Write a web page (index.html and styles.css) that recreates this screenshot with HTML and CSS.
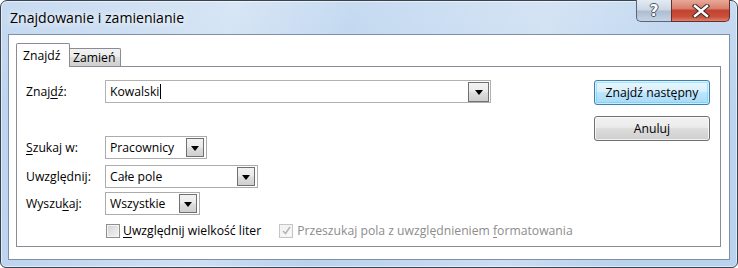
FILE: index.html
```html
<!DOCTYPE html>
<html lang="pl">
<head>
<meta charset="utf-8">
<title>Znajdowanie i zamienianie</title>
<link rel="stylesheet" href="styles.css">
</head>
<body>
<div class="window">
  <div class="titlebar">
    <div class="title">Znajdowanie i zamienianie</div>
    <div class="caption-buttons">
      <div class="cap help"><span class="qmark">?</span></div>
      <div class="cap close">
        <svg width="20" height="14" viewBox="0 0 20 14">
          <path d="M4 2 L16 12 M16 2 L4 12" stroke="#3a2a2a" stroke-width="4.4" stroke-linecap="square" fill="none"/>
          <path d="M4 2 L16 12 M16 2 L4 12" stroke="#ffffff" stroke-width="2.4" stroke-linecap="square" fill="none"/>
        </svg>
      </div>
    </div>
  </div>
  <div class="client">
    <div class="tabs">
      <div class="tab active">Znajdź</div>
      <div class="tab">Zamień</div>
    </div>
    <div class="panel">
      <div class="form">
        <div class="row r1">
          <div class="lbl">Znaj<u>d</u>ź:</div>
          <div class="textbox">Kowalski<span class="caret"></span><span class="ddbtn big"><i class="arrow"></i></span></div>
        </div>
        <div class="row r2">
          <div class="lbl"><u>S</u>zukaj w:</div>
          <div class="combo w-prac">Pracownicy<span class="ddbtn"><i class="arrow"></i></span></div>
        </div>
        <div class="row r3">
          <div class="lbl">Uwzględnij:</div>
          <div class="combo w-uwz">Całe pole<span class="ddbtn"><i class="arrow"></i></span></div>
        </div>
        <div class="row r4">
          <div class="lbl">Wyszu<u>k</u>aj:</div>
          <div class="combo w-wsz">Wszystkie<span class="ddbtn"><i class="arrow"></i></span></div>
        </div>
        <div class="row r5">
          <div class="lbl"></div>
          <div class="checks">
            <div class="check c1"><span class="box"></span><span class="ctext"><u>U</u>względnij wielkość liter</span></div>
            <div class="check c2 disabled"><span class="box checked">
              <svg width="11" height="11" viewBox="0 0 11 11"><path d="M2 6 L4.5 8.5 L9 2" stroke="#b5b5b5" stroke-width="1.6" fill="none"/></svg>
            </span><span class="ctext">Przeszukaj pola z uwzględnieniem <u>f</u>ormatowania</span></div>
          </div>
        </div>
      </div>
      <div class="buttons">
        <div class="btn default">Znajdź następny</div>
        <div class="btn">Anuluj</div>
      </div>
    </div>
  </div>
</div>
</body>
</html>
```
FILE: styles.css
```css
html, body {
  margin: 0;
  padding: 0;
  background: #ffffff;
}
body {
  width: 738px;
  height: 268px;
  overflow: hidden;
  font-family: "Open Sans", "Noto Sans", "Liberation Sans", sans-serif;
  font-size: 12.2px;
  color: #000;
}
.window {
  box-sizing: border-box;
  width: 738px;
  height: 268px;
  border: 1px solid #39434f;
  border-radius: 7px 7px 6px 6px;
  background:
    linear-gradient(100deg, rgba(255,255,255,0) 0%, rgba(255,255,255,0.3) 30%, rgba(255,255,255,0) 45%, rgba(255,255,255,0.25) 70%, rgba(255,255,255,0) 85%),
    linear-gradient(180deg, #c7dbf1 0%, #bcd4ef 40%, #b9d2ee 100%);
  box-shadow: inset 0 0 0 1px rgba(255,255,255,0.55);
  padding: 0 7px 7px 7px;
  display: flex;
  flex-direction: column;
}
.titlebar {
  height: 33px;
  display: flex;
  justify-content: space-between;
  align-items: flex-start;
}
.title {
  font-size: 14.1px;
  margin-top: 7px;
  margin-left: 2px;
  color: #000;
  text-shadow: 0 0 6px rgba(255,255,255,0.9), 0 0 10px rgba(255,255,255,0.8);
}
.caption-buttons {
  display: flex;
  margin-top: -1px;
}
.cap {
  height: 22px;
  box-sizing: border-box;
  border: 1px solid #5a6676;
  border-top: none;
  display: flex;
  align-items: center;
  justify-content: center;
}
.help {
  width: 35px;
  border-radius: 0 0 0 5px;
  border-right: none;
  background: linear-gradient(180deg, #e3eaf2 0%, #cdd8e5 45%, #aebdd0 55%, #c4d3e5 100%);
}
.qmark {
  font-family: "DejaVu Sans", sans-serif;
  font-weight: bold;
  font-size: 15px;
  line-height: 15px;
  color: #ffffff;
  text-shadow: -1px 0 #4a5566, 1px 0 #4a5566, 0 -1px #4a5566, 0 1px #4a5566;
  margin-top: 1px;
}
.close {
  width: 59px;
  border-radius: 0 0 5px 0;
  border-color: #6a2e28;
  background: linear-gradient(180deg, #e9a899 0%, #d8806e 40%, #c4432f 50%, #c9503c 80%, #dd806c 100%);
}
.close svg { display: block; }

.client {
  flex: 1;
  background: #ffffff;
  border: 1px solid #7f8fa6;
  padding: 8px 8px 12px 7px;
  display: flex;
  flex-direction: column;
}
.tabs {
  display: flex;
  align-items: flex-end;
  height: 23px;
  position: relative;
  z-index: 1;
}
.tab {
  box-sizing: border-box;
  border: 1px solid #898c95;
  border-bottom: none;
}
.tab.active {
  width: 54px;
  height: 24px;
  margin-bottom: -1px;
  background: #ffffff;
  padding: 3px 0 0 6px;
  border-radius: 2px 2px 0 0;
}
.tab:not(.active) {
  width: 51px;
  height: 18px;
  border-left: none;
  background: linear-gradient(180deg, #f2f2f2 0%, #ebebeb 45%, #dddddd 50%, #cfcfcf 100%);
  padding: 0 0 0 3px;
  line-height: 17px;
  border-radius: 0 2px 0 0;
}
.panel {
  flex: 1;
  border: 1px solid #898c95;
  padding: 13px 10px 0 9px;
  display: flex;
  justify-content: space-between;
  align-items: flex-start;
}
.form {
  display: flex;
  flex-direction: column;
}
.row {
  display: flex;
  align-items: center;
}
.lbl {
  width: 79px;
  flex: none;
  line-height: 16px;
}
.r2 { margin-top: 33px; }
.r3 { margin-top: 6px; }
.r4 { margin-top: 4px; }
.r5 { margin-top: 7px; }

.textbox, .combo {
  box-sizing: border-box;
  height: 23px;
  border: 1px solid #acacac;
  background: #fff;
  display: flex;
  align-items: center;
  padding-left: 4px;
  position: relative;
}
.textbox {
  width: 386px;
  border-color: #b1b1b1;
}
.caret {
  width: 1px;
  height: 15px;
  background: #000;
  margin-left: 1px;
}
.w-prac { width: 102px; }
.w-uwz { width: 153px; }
.w-wsz { width: 95px; }

.ddbtn {
  position: absolute;
  right: 2px;
  top: 1px;
  width: 18px;
  height: 19px;
  box-sizing: border-box;
  border: 1px solid #707070;
  background: linear-gradient(180deg, #f2f2f2 0%, #ebebeb 45%, #dddddd 55%, #cfcfcf 100%);
  display: flex;
  align-items: center;
  justify-content: center;
}
.ddbtn.big {
  right: 1px;
  top: 1px;
  width: 21px;
  height: 20px;
}
.arrow {
  display: block;
  width: 0;
  height: 0;
  border-left: 4px solid transparent;
  border-right: 4px solid transparent;
  border-top: 5px solid #000;
  margin-top: 1px;
}

.checks {
  display: flex;
  align-items: center;
}
.check {
  display: flex;
  align-items: center;
}
.c1 { margin-left: 1px; }
.c2 { margin-left: 18px; }
.box {
  box-sizing: border-box;
  width: 14px;
  height: 14px;
  border: 1px solid #8e8f8f;
  background: linear-gradient(135deg, #cfd2d6 0%, #e6e7e9 60%, #f4f4f4 100%);
  box-shadow: inset 0 0 0 1px #f4f4f4;
  margin-right: 3px;
  display: flex;
  align-items: center;
  justify-content: center;
}
.box.checked {
  border-color: #c5c5c5;
  background: linear-gradient(135deg, #f0f0f0 0%, #fafafa 100%);
  margin-right: 4px;
}
.box svg { display: block; }
.disabled .ctext { color: #8d8d8d; }

.buttons {
  display: flex;
  flex-direction: column;
  gap: 11px;
}
.btn {
  box-sizing: border-box;
  width: 116px;
  height: 25px;
  border: 1px solid #707070;
  border-radius: 3px;
  background: linear-gradient(180deg, #f2f2f2 0%, #ebebeb 45%, #dddddd 50%, #cfcfcf 100%);
  box-shadow: inset 0 0 0 1px rgba(255,255,255,0.7);
  display: flex;
  align-items: center;
  justify-content: center;
}
.btn.default {
  border-color: #3c7fb1;
  background: linear-gradient(180deg, #eaf6fd 0%, #d9f0fc 45%, #bee6fd 50%, #a7d9f5 100%);
  box-shadow: inset 0 0 0 1px rgba(255,255,255,0.6), inset 0 0 0 2px rgba(72,200,250,0.4);
}
u { text-decoration: underline; text-underline-offset: 2px; }
```
